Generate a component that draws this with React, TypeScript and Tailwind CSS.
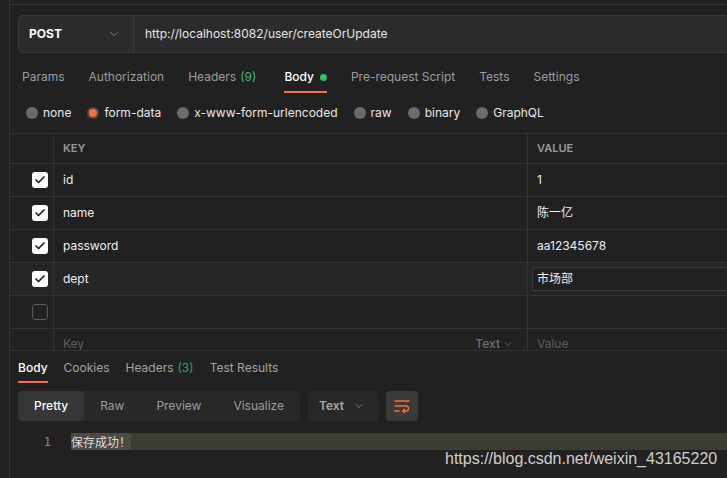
import { ChevronDown, Check } from "lucide-react";

const reqTabs = [
  { label: "Params" },
  { label: "Authorization" },
  { label: "Headers", count: "(9)" },
  { label: "Body", active: true, dot: true },
  { label: "Pre-request Script" },
  { label: "Tests" },
  { label: "Settings" },
];

const bodyTypes = [
  { label: "none" },
  { label: "form-data", active: true },
  { label: "x-www-form-urlencoded" },
  { label: "raw" },
  { label: "binary" },
  { label: "GraphQL" },
];

const rows = [
  { key: "id", value: "1" },
  { key: "name", value: "陈一亿" },
  { key: "password", value: "aa12345678" },
  { key: "dept", value: "市场部", hover: true },
];

const resTabs = [
  { label: "Body", active: true },
  { label: "Cookies" },
  { label: "Headers", count: "(3)" },
  { label: "Test Results" },
];

function Checkbox({ checked }: { checked: boolean }) {
  return checked ? (
    <div className="w-4 h-4 rounded-[3px] bg-white flex items-center justify-center">
      <Check className="w-3 h-3 text-[#212121]" strokeWidth={3.5} />
    </div>
  ) : (
    <div className="w-4 h-4 rounded-[3px] border border-[#5a5a5a]" />
  );
}

function WrapIcon() {
  return (
    <svg width="18" height="18" viewBox="0 0 18 18" fill="none" stroke="#ff6c37" strokeWidth="1.3" strokeLinecap="round">
      <path d="M2 4h14" />
      <path d="M2 9h11a2.5 2.5 0 0 1 0 5h-3" />
      <path d="M11.5 12.3 9.8 14l1.7 1.7" />
      <path d="M2 14h4" />
    </svg>
  );
}

export default function App() {
  return (
    <div className="relative w-[727px] h-[478px] bg-[#212121] flex overflow-hidden font-['Inter',sans-serif] text-[12px]">
      {/* left rail */}
      <div className="w-[10px] shrink-0 border-r border-[#333333]" />

      <div className="flex-1 flex flex-col min-w-0">
        <div className="h-[5px] shrink-0 border-b border-[#333333]" />

        {/* request pane */}
        <div className="h-[345px] shrink-0 overflow-hidden flex flex-col">
          {/* url bar */}
          <div className="mt-[10px] ml-[8px] h-[38px] shrink-0 flex bg-[#2b2b2b] border border-[#393939] border-r-0 rounded-l-[5px]">
            <div className="w-[115px] shrink-0 flex items-center justify-between pl-[10px] pr-[12px] border-r border-[#393939]">
              <span className="font-bold text-white text-[12px]">POST</span>
              <ChevronDown className="w-3.5 h-3.5 text-[#8a8a8a]" strokeWidth={1.5} />
            </div>
            <div className="flex items-center pl-[11px] text-[#e6e6e6]">
              http://localhost:8082/user/createOrUpdate
            </div>
          </div>

          {/* request tabs */}
          <div className="mt-[9px] ml-[12px] flex gap-[24px] h-[31px] shrink-0">
            {reqTabs.map((t) => (
              <div
                key={t.label}
                className={
                  "flex items-center gap-[6px] pt-[1px] border-b-2 " +
                  (t.active ? "ml-[4px] border-[#ff6c37] text-white font-medium" : "border-transparent text-[#9d9d9d]")
                }
              >
                <span>
                  {t.label}
                  {t.count && <span className="text-[#3dbd75] ml-[4px]">{t.count}</span>}
                </span>
                {t.dot && <span className="w-[7px] h-[7px] rounded-full bg-[#31c06c]" />}
              </div>
            ))}
          </div>

          {/* body types */}
          <div className="h-[40px] shrink-0 ml-[16px] flex items-center gap-[16px]">
            {bodyTypes.map((b) => (
              <div key={b.label} className="flex items-center gap-[5px]">
                {b.active ? (
                  <span className="w-[12px] h-[12px] rounded-full bg-[#4b4b4b] flex items-center justify-center">
                    <span className="w-[8px] h-[8px] rounded-full bg-[#ff6c37]" />
                  </span>
                ) : (
                  <span className="w-[12px] h-[12px] rounded-full bg-[#6b6b6b]" />
                )}
                <span className="text-[#e8e8e8]">{b.label}</span>
              </div>
            ))}
          </div>

          {/* table */}
          <div className="border-t border-[#333333]">
            <div className="flex h-[30px] border-b border-[#333333] text-[11px] font-semibold text-[#9a9a9a]">
              <div className="w-[44px] shrink-0 border-r border-[#333333]" />
              <div className="w-[474px] shrink-0 border-r border-[#333333] flex items-center pl-[9px]">KEY</div>
              <div className="flex-1 flex items-center pl-[9px]">VALUE</div>
            </div>
            {rows.map((r) => (
              <div
                key={r.key}
                className={"flex h-[33px] border-b border-[#333333] text-[#eeeeee] " + (r.hover ? "bg-[#262626]" : "")}
              >
                <div className="w-[44px] shrink-0 border-r border-[#333333] flex items-center justify-end pr-[5px]">
                  <Checkbox checked />
                </div>
                <div className="w-[474px] shrink-0 border-r border-[#333333] flex items-center pl-[9px]">{r.key}</div>
                <div className="flex-1 flex items-center pl-[4px] py-[4px] font-['Inter','Noto_Sans_CJK_SC',sans-serif]">
                  <div
                    className={
                      "h-full w-full flex items-center pl-[4px] " +
                      (r.hover ? "border border-[#3a3a3a] border-r-0 rounded-l-[3px] bg-[#212121]" : "pl-[5px]")
                    }
                  >
                    {r.value}
                  </div>
                </div>
              </div>
            ))}
            <div className="flex h-[33px] border-b border-[#333333]">
              <div className="w-[44px] shrink-0 border-r border-[#333333] flex items-center justify-end pr-[5px]">
                <Checkbox checked={false} />
              </div>
              <div className="w-[474px] shrink-0 border-r border-[#333333]" />
              <div className="flex-1" />
            </div>
            <div className="flex h-[30px] text-[#5e5e5e]">
              <div className="w-[44px] shrink-0 border-r border-[#333333]" />
              <div className="w-[474px] shrink-0 border-r border-[#333333] flex items-center justify-between pl-[9px] pr-[13px]">
                <span>Key</span>
                <span className="flex items-center gap-[2px] text-[12px] font-medium text-[#6e6e6e]">
                  Text <ChevronDown className="w-3 h-3" strokeWidth={1.5} />
                </span>
              </div>
              <div className="flex-1 flex items-center pl-[9px]">Value</div>
            </div>
          </div>
        </div>

        {/* response pane */}
        <div className="flex-1 border-t border-[#333333] flex flex-col">
          <div className="ml-[8px] flex gap-[16px] h-[32px] shrink-0">
            {resTabs.map((t) => (
              <div
                key={t.label}
                className={
                  "flex items-center pt-[3px] border-b-2 " +
                  (t.active ? "border-[#ff6c37] text-white font-medium" : "border-transparent text-[#a3a3a3]")
                }
              >
                {t.label}
                {t.count && <span className="text-[#2aa65c] ml-[4px]">{t.count}</span>}
              </div>
            ))}
          </div>

          <div className="mt-[8px] ml-[8px] flex items-center gap-[8px]">
            <div className="flex h-[30px] rounded-[4px] bg-[#282828] overflow-hidden">
              {["Pretty", "Raw", "Preview", "Visualize"].map((s, i) => (
                <div
                  key={s}
                  className={
                    "px-[16px] flex items-center " +
                    (i === 0 ? "bg-[#363636] text-white font-medium rounded-[4px]" : "text-[#9c9c9c]")
                  }
                >
                  {s}
                </div>
              ))}
            </div>
            <div className="w-[70px] h-[30px] rounded-[4px] bg-[#282828] flex items-center justify-between pl-[11px] pr-[13px]">
              <span className="text-[12px] font-semibold text-[#a8a8a8]">Text</span>
              <ChevronDown className="w-3 h-3 text-[#9a9a9a]" strokeWidth={1.5} />
            </div>
            <div className="w-[32px] h-[30px] rounded-[4px] bg-[#3a3a3a] flex items-center justify-center">
              <WrapIcon />
            </div>
          </div>

          <div className="mt-[12px] flex h-[17px] items-center">
            <div className="w-[41px] shrink-0 text-right font-['DejaVu_Sans_Mono',monospace] text-[12px] text-[#8a8a8a]">1</div>
            <div className="ml-[20px] flex-1 h-full bg-[#3c3c31] flex items-center">
              <span className="h-full flex items-center bg-[#4a4a44] text-[12px] text-[#dcdcdc] font-['Noto_Sans_CJK_SC',sans-serif] leading-none">
                保存成功！
              </span>
            </div>
          </div>
        </div>
      </div>

      {/* watermark */}
      <div className="absolute left-[445px] top-[449px] text-[16px] leading-[20px] text-[#cfcfcf] font-['Liberation_Sans',sans-serif]">
        https://blog.csdn.net/weixin_43165220
      </div>
    </div>
  );
}
